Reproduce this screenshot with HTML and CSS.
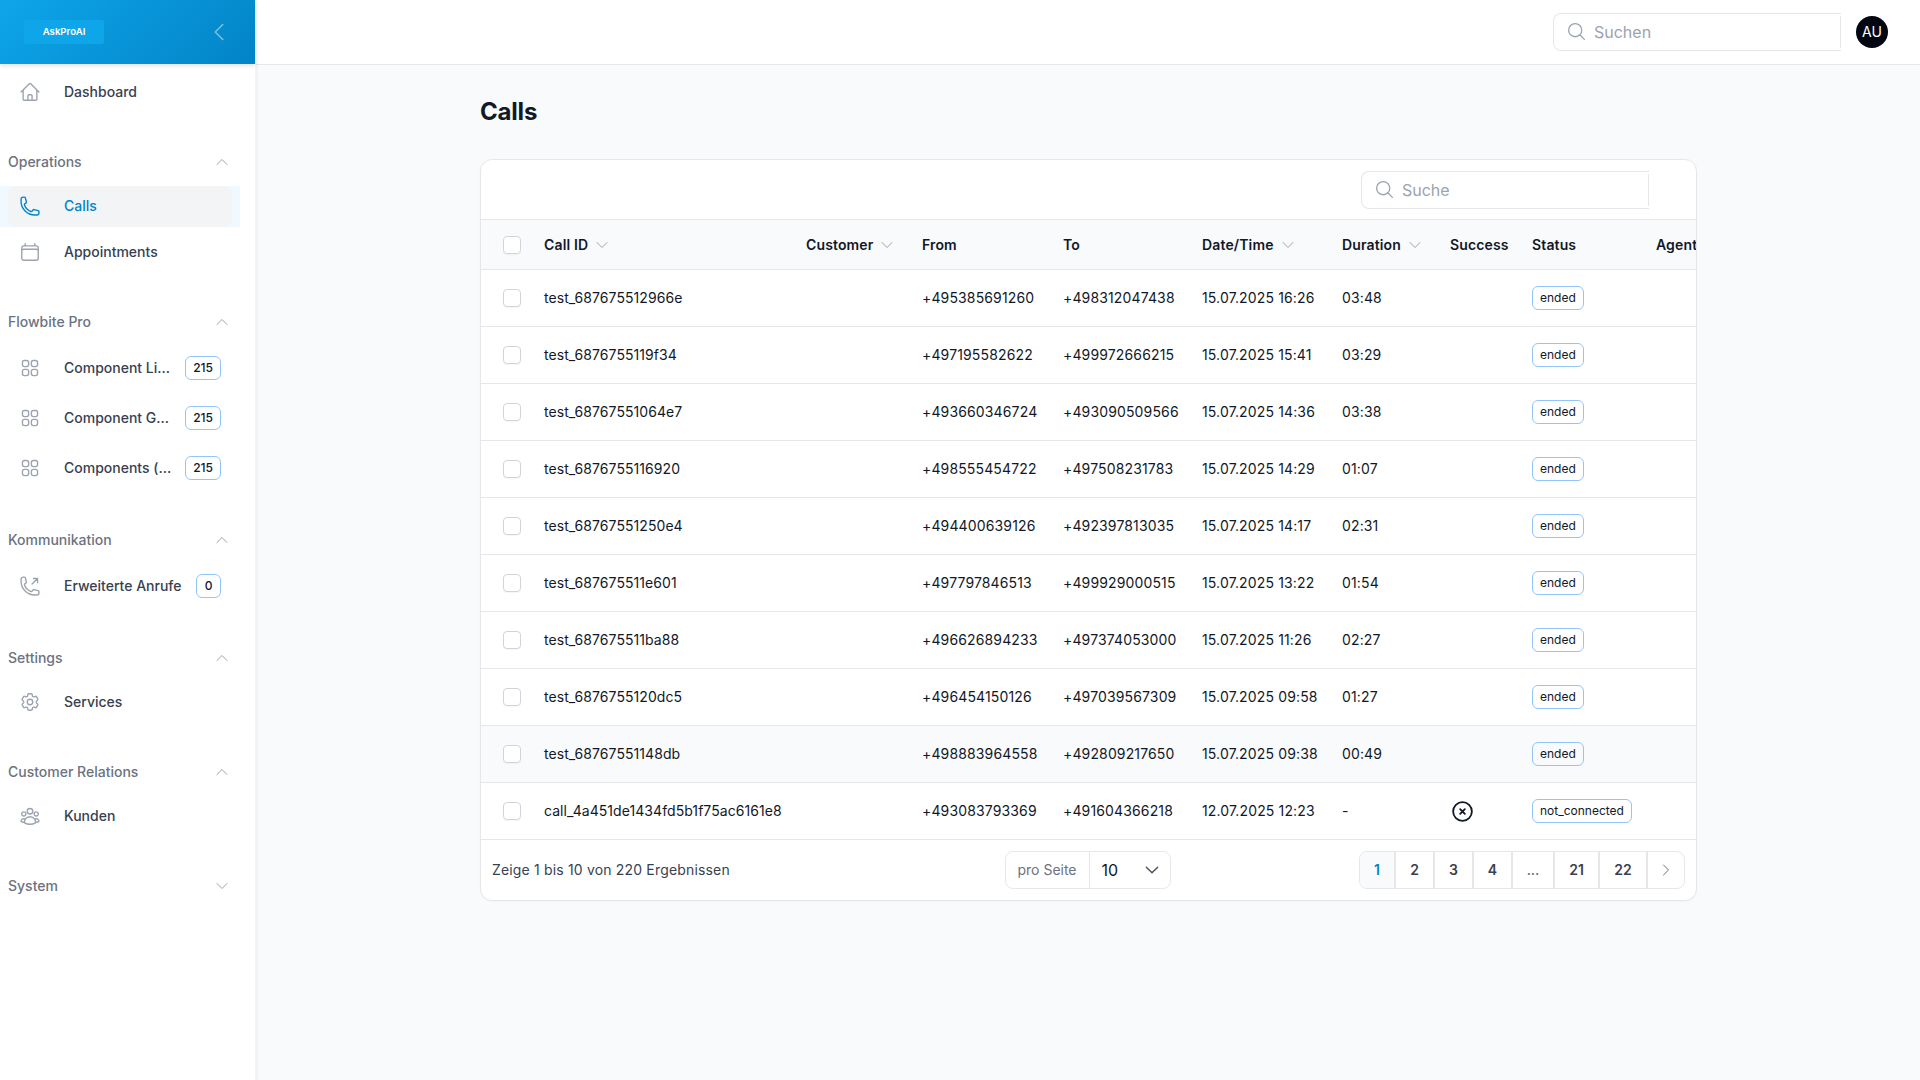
FILE: index.html
```html
<!DOCTYPE html>
<html lang="de">
<head>
<meta charset="utf-8">
<title>Calls</title>
<link rel="stylesheet" href="styles.css">
</head>
<body>
<svg class="defs" aria-hidden="true">
  <symbol id="i-home" viewBox="0 0 24 24"><path d="m2.25 12 8.954-8.955c.44-.439 1.152-.439 1.591 0L21.75 12M4.5 9.75v10.125c0 .621.504 1.125 1.125 1.125H9.75v-4.875c0-.621.504-1.125 1.125-1.125h2.25c.621 0 1.125.504 1.125 1.125V21h4.125c.621 0 1.125-.504 1.125-1.125V9.75M8.25 21h8.25"/></symbol>
  <symbol id="i-phone" viewBox="0 0 24 24"><path d="M2.25 6.75c0 8.284 6.716 15 15 15h2.25a2.25 2.25 0 0 0 2.25-2.25v-1.372c0-.516-.351-.966-.852-1.091l-4.423-1.106c-.44-.11-.902.055-1.173.417l-.97 1.293c-.282.376-.769.542-1.21.38a12.035 12.035 0 0 1-7.143-7.143c-.162-.441.004-.928.38-1.21l1.293-.97c.363-.271.527-.734.417-1.173L6.963 3.102a1.125 1.125 0 0 0-1.091-.852H4.5A2.25 2.25 0 0 0 2.25 4.5v2.25Z"/></symbol>
  <symbol id="i-cal" viewBox="0 0 24 24"><path d="M6.75 3v2.25M17.25 3v2.25M3 18.75V7.5a2.25 2.25 0 0 1 2.25-2.25h13.5A2.25 2.25 0 0 1 21 7.5v11.25m-18 0A2.25 2.25 0 0 0 5.25 21h13.5A2.25 2.25 0 0 0 21 18.75m-18 0v-7.5A2.25 2.25 0 0 1 5.25 9h13.5A2.25 2.25 0 0 1 21 11.25v7.5"/></symbol>
  <symbol id="i-grid" viewBox="0 0 24 24"><path d="M3.75 6A2.25 2.25 0 0 1 6 3.75h2.25A2.25 2.25 0 0 1 10.5 6v2.25a2.25 2.25 0 0 1-2.25 2.25H6a2.25 2.25 0 0 1-2.25-2.25V6ZM3.75 15.75A2.25 2.25 0 0 1 6 13.5h2.25a2.25 2.25 0 0 1 2.25 2.25V18a2.25 2.25 0 0 1-2.25 2.25H6A2.25 2.25 0 0 1 3.75 18v-2.25ZM13.5 6a2.25 2.25 0 0 1 2.25-2.25H18A2.25 2.25 0 0 1 20.25 6v2.25A2.25 2.25 0 0 1 18 10.5h-2.25a2.25 2.25 0 0 1-2.25-2.25V6ZM13.5 15.75a2.25 2.25 0 0 1 2.25-2.25H18a2.25 2.25 0 0 1 2.25 2.25V18A2.25 2.25 0 0 1 18 20.25h-2.25A2.25 2.25 0 0 1 13.5 18v-2.25Z"/></symbol>
  <symbol id="i-phone-out" viewBox="0 0 24 24"><path d="M20.25 3.75v4.5m0-4.5h-4.5m4.5 0-6 6m3 12c-8.284 0-15-6.716-15-15V4.5A2.25 2.25 0 0 1 4.5 2.25h1.372c.516 0 .966.351 1.091.852l1.106 4.423c.11.44-.055.902-.417 1.173l-1.293.97a1.062 1.062 0 0 0-.38 1.21 12.035 12.035 0 0 0 7.143 7.143c.441.162.928-.004 1.21-.38l.97-1.293a1.125 1.125 0 0 1 1.173-.417l4.423 1.106c.5.125.852.575.852 1.091V19.5a2.25 2.25 0 0 1-2.25 2.25h-2.25Z"/></symbol>
  <symbol id="i-cog" viewBox="0 0 24 24"><path d="M9.594 3.94c.09-.542.56-.94 1.11-.94h2.593c.55 0 1.02.398 1.11.94l.213 1.281c.063.374.313.686.645.87.074.04.147.083.22.127.325.196.72.257 1.075.124l1.217-.456a1.125 1.125 0 0 1 1.37.49l1.296 2.247a1.125 1.125 0 0 1-.26 1.431l-1.003.827c-.293.241-.438.613-.43.992a7.723 7.723 0 0 1 0 .255c-.008.378.137.75.43.991l1.004.827c.424.35.534.955.26 1.43l-1.298 2.247a1.125 1.125 0 0 1-1.369.491l-1.217-.456c-.355-.133-.75-.072-1.076.124a6.47 6.47 0 0 1-.22.128c-.331.183-.581.495-.644.869l-.213 1.281c-.09.543-.56.94-1.11.94h-2.594c-.55 0-1.019-.398-1.11-.94l-.213-1.281c-.062-.374-.312-.686-.644-.87a6.52 6.52 0 0 1-.22-.127c-.325-.196-.72-.257-1.076-.124l-1.217.456a1.125 1.125 0 0 1-1.369-.49l-1.297-2.247a1.125 1.125 0 0 1 .26-1.431l1.004-.827c.292-.24.437-.613.43-.991a6.932 6.932 0 0 1 0-.255c.007-.38-.138-.751-.43-.992l-1.004-.827a1.125 1.125 0 0 1-.26-1.43l1.297-2.247a1.125 1.125 0 0 1 1.37-.491l1.216.456c.356.133.751.072 1.076-.124.072-.044.146-.086.22-.128.332-.183.582-.495.644-.869l.214-1.28Z"/><path d="M15 12a3 3 0 1 1-6 0 3 3 0 0 1 6 0Z"/></symbol>
  <symbol id="i-users" viewBox="0 0 24 24"><path d="M18 18.72a9.094 9.094 0 0 0 3.741-.479 3 3 0 0 0-4.682-2.72m.94 3.198.001.031c0 .225-.012.447-.037.666A11.944 11.944 0 0 1 12 21c-2.17 0-4.207-.576-5.963-1.584A6.062 6.062 0 0 1 6 18.719m12 0a5.971 5.971 0 0 0-.941-3.197m0 0A5.995 5.995 0 0 0 12 12.75a5.995 5.995 0 0 0-5.058 2.772m0 0a3 3 0 0 0-4.681 2.72 8.986 8.986 0 0 0 3.74.477m.94-3.197a5.971 5.971 0 0 0-.94 3.197M15 6.75a3 3 0 1 1-6 0 3 3 0 0 1 6 0Zm6 3a2.25 2.25 0 1 1-4.5 0 2.25 2.25 0 0 1 4.5 0Zm-13.5 0a2.25 2.25 0 1 1-4.5 0 2.25 2.25 0 0 1 4.5 0Z"/></symbol>
  <symbol id="i-search" viewBox="0 0 24 24"><path d="m21 21-5.197-5.197m0 0A7.5 7.5 0 1 0 5.196 5.196a7.5 7.5 0 0 0 10.607 10.607Z"/></symbol>
  <symbol id="i-up" viewBox="0 0 24 24"><path d="m4.5 15.75 7.5-7.5 7.5 7.5"/></symbol>
  <symbol id="i-down" viewBox="0 0 24 24"><path d="m19.5 8.25-7.5 7.5-7.5-7.5"/></symbol>
  <symbol id="i-left" viewBox="0 0 24 24"><path d="M15.75 19.5 8.25 12l7.5-7.5"/></symbol>
  <symbol id="i-right" viewBox="0 0 24 24"><path d="m8.25 4.5 7.5 7.5-7.5 7.5"/></symbol>
  <symbol id="i-x" viewBox="0 0 24 24"><path d="m9.75 9.75 4.5 4.5m0-4.5-4.5 4.5M21 12a9 9 0 1 1-18 0 9 9 0 0 1 18 0Z"/></symbol>
</svg>

<div class="app">
  <aside class="sidebar">
    <div class="brand">
      <div class="logo">AskProAI</div>
      <svg class="brand-back"><use href="#i-left"/></svg>
    </div>
    <nav class="nav">
      <a class="item"><svg class="ico"><use href="#i-home"/></svg><span class="label">Dashboard</span></a>

      <div class="group-head"><span>Operations</span><svg class="chev"><use href="#i-up"/></svg></div>
      <div class="active-wrap"><a class="item active"><svg class="ico"><use href="#i-phone"/></svg><span class="label">Calls</span></a></div>
      <a class="item"><svg class="ico"><use href="#i-cal"/></svg><span class="label">Appointments</span></a>

      <div class="group-head"><span>Flowbite Pro</span><svg class="chev"><use href="#i-up"/></svg></div>
      <a class="item tall"><svg class="ico"><use href="#i-grid"/></svg><span class="label">Component Li...</span><span class="count">215</span></a>
      <a class="item tall"><svg class="ico"><use href="#i-grid"/></svg><span class="label">Component G...</span><span class="count">215</span></a>
      <a class="item tall"><svg class="ico"><use href="#i-grid"/></svg><span class="label">Components (...</span><span class="count">215</span></a>

      <div class="group-head"><span>Kommunikation</span><svg class="chev"><use href="#i-up"/></svg></div>
      <a class="item tall"><svg class="ico"><use href="#i-phone-out"/></svg><span class="label">Erweiterte Anrufe</span><span class="count">0</span></a>

      <div class="group-head"><span>Settings</span><svg class="chev"><use href="#i-up"/></svg></div>
      <a class="item"><svg class="ico"><use href="#i-cog"/></svg><span class="label">Services</span></a>

      <div class="group-head"><span>Customer Relations</span><svg class="chev"><use href="#i-up"/></svg></div>
      <a class="item"><svg class="ico"><use href="#i-users"/></svg><span class="label">Kunden</span></a>

      <div class="group-head"><span>System</span><svg class="chev"><use href="#i-down"/></svg></div>
    </nav>
  </aside>

  <div class="content">
    <header class="topbar">
      <div class="search"><svg class="search-ico"><use href="#i-search"/></svg><span class="placeholder">Suchen</span></div>
      <div class="avatar">AU</div>
    </header>

    <main class="main">
      <h1 class="title">Calls</h1>
      <section class="card">
        <div class="toolbar">
          <div class="search"><svg class="search-ico"><use href="#i-search"/></svg><span class="placeholder">Suche</span></div>
        </div>
        <div class="table-wrap">
          <table class="table">
            <colgroup>
              <col class="c-check"><col class="c-id"><col class="c-cust"><col class="c-from"><col class="c-to"><col class="c-date"><col class="c-dur"><col class="c-succ"><col class="c-status"><col class="c-agent">
            </colgroup>
            <thead>
              <tr>
                <th class="cell-check"><span class="check"></span></th>
                <th>Call ID<svg class="sort"><use href="#i-down"/></svg></th>
                <th>Customer<svg class="sort"><use href="#i-down"/></svg></th>
                <th>From</th>
                <th>To</th>
                <th>Date/Time<svg class="sort"><use href="#i-down"/></svg></th>
                <th>Duration<svg class="sort"><use href="#i-down"/></svg></th>
                <th>Success</th>
                <th>Status</th>
                <th>Agent</th>
              </tr>
            </thead>
            <tbody>
              <tr><td class="cell-check"><span class="check"></span></td><td class="cell-id">test_687675512966e</td><td></td><td>+495385691260</td><td>+498312047438</td><td>15.07.2025 16:26</td><td>03:48</td><td></td><td><span class="badge">ended</span></td><td></td></tr>
              <tr><td class="cell-check"><span class="check"></span></td><td class="cell-id">test_6876755119f34</td><td></td><td>+497195582622</td><td>+499972666215</td><td>15.07.2025 15:41</td><td>03:29</td><td></td><td><span class="badge">ended</span></td><td></td></tr>
              <tr><td class="cell-check"><span class="check"></span></td><td class="cell-id">test_68767551064e7</td><td></td><td>+493660346724</td><td>+493090509566</td><td>15.07.2025 14:36</td><td>03:38</td><td></td><td><span class="badge">ended</span></td><td></td></tr>
              <tr><td class="cell-check"><span class="check"></span></td><td class="cell-id">test_6876755116920</td><td></td><td>+498555454722</td><td>+497508231783</td><td>15.07.2025 14:29</td><td>01:07</td><td></td><td><span class="badge">ended</span></td><td></td></tr>
              <tr><td class="cell-check"><span class="check"></span></td><td class="cell-id">test_68767551250e4</td><td></td><td>+494400639126</td><td>+492397813035</td><td>15.07.2025 14:17</td><td>02:31</td><td></td><td><span class="badge">ended</span></td><td></td></tr>
              <tr><td class="cell-check"><span class="check"></span></td><td class="cell-id">test_687675511e601</td><td></td><td>+497797846513</td><td>+499929000515</td><td>15.07.2025 13:22</td><td>01:54</td><td></td><td><span class="badge">ended</span></td><td></td></tr>
              <tr><td class="cell-check"><span class="check"></span></td><td class="cell-id">test_687675511ba88</td><td></td><td>+496626894233</td><td>+497374053000</td><td>15.07.2025 11:26</td><td>02:27</td><td></td><td><span class="badge">ended</span></td><td></td></tr>
              <tr><td class="cell-check"><span class="check"></span></td><td class="cell-id">test_6876755120dc5</td><td></td><td>+496454150126</td><td>+497039567309</td><td>15.07.2025 09:58</td><td>01:27</td><td></td><td><span class="badge">ended</span></td><td></td></tr>
              <tr class="hover"><td class="cell-check"><span class="check"></span></td><td class="cell-id">test_68767551148db</td><td></td><td>+498883964558</td><td>+492809217650</td><td>15.07.2025 09:38</td><td>00:49</td><td></td><td><span class="badge">ended</span></td><td></td></tr>
              <tr><td class="cell-check"><span class="check"></span></td><td class="cell-id" colspan="2">call_4a451de1434fd5b1f75ac6161e8</td><td>+493083793369</td><td>+491604366218</td><td>12.07.2025 12:23</td><td>-</td><td><svg class="x-ico"><use href="#i-x"/></svg></td><td><span class="badge">not_connected</span></td><td></td></tr>
            </tbody>
          </table>
        </div>
        <div class="footer">
          <div class="summary">Zeige 1 bis 10 von 220 Ergebnissen</div>
          <div class="perpage">
            <span class="perpage-label">pro Seite</span>
            <span class="perpage-value">10<svg class="perpage-chev"><use href="#i-down"/></svg></span>
          </div>
          <div class="pager">
            <span class="page current">1</span><span class="page p2">2</span><span class="page p2">3</span><span class="page p2">4</span><span class="page dots">...</span><span class="page p21">21</span><span class="page p22">22</span><span class="page next"><svg class="next-ico"><use href="#i-right"/></svg></span>
          </div>
        </div>
      </section>
    </main>
  </div>
</div>
</body>
</html>
```

FILE: styles.css
```css
* { box-sizing: border-box; }
html, body { margin: 0; height: 100%; }
body {
  font-family: Inter, "Liberation Sans", sans-serif;
  font-size: 14px;
  line-height: 20px;
  color: #111827;
  background: #f9fafb;
  overflow: hidden;
}
.defs { display: none; }
svg { fill: none; stroke: currentColor; stroke-width: 1.5; stroke-linecap: round; stroke-linejoin: round; flex: none; }

.app { display: flex; height: 1080px; }

/* Sidebar */
.sidebar {
  width: 256px;
  flex: none;
  background: #fff;
  border-right: 1px solid #f3f4f6;
  box-shadow: 1px 0 3px rgba(0,0,0,.06);
  position: relative;
  z-index: 2;
}
.brand {
  height: 64px;
  display: flex;
  align-items: center;
  justify-content: space-between;
  padding: 0 24px;
  background: linear-gradient(135deg, #0ea5e9 0%, #0284c7 100%);
  box-shadow: 0 2px 4px rgba(0,0,0,.12);
}
.logo {
  width: 80px;
  height: 24px;
  border-radius: 2px;
  background: #0ea5e9;
  color: #fff;
  font-size: 9.6px;
  font-weight: 600;
  line-height: 24px;
  text-align: center;
}
.brand-back { width: 24px; height: 24px; color: #7dbfe4; }

.nav { width: 240px; padding-top: 7.5px; display: flex; flex-direction: column; }
.item {
  display: flex;
  align-items: center;
  height: 41px;
  margin: 0 8px 5px;
  padding: 0 11px 0 11px;
  border-radius: 8px;
  color: #374151;
  font-weight: 500;
}
.item.tall { height: 45px; margin-bottom: 5px; }
.item.tall:has(+ .group-head), .item:has(+ .group-head) { margin-bottom: 0; }
.ico { width: 22px; height: 22px; color: #9ca3af; margin-right: 23px; }
.label { flex: 1; white-space: nowrap; overflow: hidden; }
.count {
  flex: none;
  min-width: 25px;
  height: 24px;
  padding: 0 7px;
  border: 1px solid #93c5fd;
  border-radius: 6px;
  font-size: 12px;
  line-height: 22px;
  text-align: center;
  color: #111827;
}
.active-wrap { background: #f0f9ff; height: 41px; margin-bottom: 5px; }
.active-wrap .item { background: #f3f4f6; margin-bottom: 0; color: #0284c7; }
.active-wrap .ico { color: #0284c7; }

.group-head {
  display: flex;
  align-items: center;
  justify-content: space-between;
  height: 20px;
  margin: 39.5px 0 13.5px;
  padding: 0 8px;
  color: #6b7280;
  font-weight: 500;
}
.chev { width: 16px; height: 16px; color: #9ca3af; margin-right: 2px; }

/* Top bar */
.content { flex: 1; min-width: 0; display: flex; flex-direction: column; }
.topbar {
  height: 65px;
  flex: none;
  display: flex;
  align-items: center;
  justify-content: flex-end;
  gap: 15px;
  padding: 0 32px 1px 0;
  background: #fff;
  border-bottom: 1px solid #e5e7eb;
}
.search {
  position: relative;
  width: 288px;
  height: 38px;
  display: flex;
  align-items: center;
  padding-left: 12px;
  border: 1px solid #e5e7eb;
  border-right: 0;
  border-radius: 8px 0 0 8px;
  background: #fff;
}
.search::after {
  content: "";
  position: absolute;
  right: 0;
  top: 2px;
  bottom: 2px;
  width: 1px;
  background: #e5e7eb;
}
.search-ico { width: 21px; height: 21px; color: #9ca3af; margin-right: 7px; }
.placeholder { font-size: 16px; color: #9ca3af; }
.avatar {
  width: 32px;
  height: 32px;
  border-radius: 50%;
  background: #030712;
  color: #fff;
  font-size: 14px;
  line-height: 32px;
  text-align: center;
}

/* Main */
.main { width: 100%; max-width: 1280px; margin: 0 auto; padding: 31px 31px 0 32px; }
.title { margin: 0 0 31px; font-size: 24px; line-height: 32px; font-weight: 700; color: #111827; letter-spacing: -.2px; }
.card {
  background: #fff;
  border: 1px solid #e5e7eb;
  border-radius: 12px;
  overflow: hidden;
  box-shadow: 0 1px 2px rgba(0,0,0,.03);
}
.toolbar {
  height: 59px;
  display: flex;
  align-items: center;
  justify-content: flex-end;
  padding-right: 47px;
}
.table-wrap { overflow: hidden; }
.table { width: 1215px; table-layout: fixed; border-collapse: collapse; letter-spacing: .01em; }
.c-check { width: 51px; }
.c-id { width: 262px; }
.c-cust { width: 116px; }
.c-from { width: 141px; }
.c-to { width: 139px; }
.c-date { width: 140px; }
.c-dur { width: 108px; }
.c-succ { width: 82px; }
.c-status { width: 124px; }
.c-agent { width: 52px; }
.table th, .table td {
  padding: 0 0 0 12px;
  text-align: left;
  white-space: nowrap;
  overflow: visible;
}
.table th {
  height: 50px;
  background: #f9fafb;
  font-weight: 600;
  color: #111827;
  border-top: 1px solid #e5e7eb;
  border-bottom: 1px solid #e5e7eb;
}
.table td { height: 57px; border-bottom: 1px solid #e5e7eb; color: #111827; }
.table td.cell-id { letter-spacing: .06px; }
.table tr.hover td { background: #f9fafb; }
.table .cell-check { padding-left: 22px; }
.check {
  display: block;
  width: 18px;
  height: 18px;
  background: #fff;
  border: 1px solid #d1d5db;
  border-radius: 4px;
  box-shadow: 0 1px 1px rgba(0,0,0,.04);
}
.sort { width: 16px; height: 16px; color: #9ca3af; margin-left: 6px; vertical-align: -3px; }
.badge {
  display: inline-block;
  height: 24px;
  padding: 0 7px;
  border: 1px solid #93c5fd;
  border-radius: 6px;
  font-size: 12px;
  line-height: 22px;
  color: #111827;
  letter-spacing: 0;
  vertical-align: middle;
}
.x-ico { display: block; width: 25px; height: 25px; color: #111827; stroke-width: 1.75; }

/* Footer */
.footer {
  height: 60px;
  display: grid;
  grid-template-columns: 1fr auto 1fr;
  align-items: center;
  padding: 0 11px;
}
.summary { color: #374151; letter-spacing: .012em; }
.perpage {
  display: flex;
  height: 38px;
  width: 166px;
  margin: 0 1px 0 -1px;
  border: 1px solid #e5e7eb;
  border-radius: 8px;
}
.perpage-label {
  width: 84px;
  border-right: 1px solid #e5e7eb;
  color: #6b7280;
  line-height: 36px;
  text-align: center;
}
.perpage-value {
  flex: 1;
  display: flex;
  align-items: center;
  justify-content: space-between;
  padding: 0 9px 0 12px;
  font-size: 16px;
  color: #111827;
}
.perpage-chev { width: 18px; height: 18px; color: #4b5563; stroke-width: 2; }
.pager {
  justify-self: end;
  display: flex;
  height: 38px;
  border: 1px solid #e5e7eb;
  border-radius: 8px;
  overflow: hidden;
}
.page {
  display: flex;
  align-items: center;
  justify-content: center;
  border-right: 2px solid #e5e7eb;
  color: #374151;
  font-weight: 600;
}
.current { width: 36px; background: #f9fafb; color: #0284c7; }
.p2 { width: 39px; }
.dots { width: 42px; color: #6b7280; font-weight: 500; }
.p21 { width: 45px; }
.p22 { width: 48px; }
.next { width: 36px; border-right: 0; }
.next-ico { width: 16px; height: 16px; color: #6b7280; }
```
